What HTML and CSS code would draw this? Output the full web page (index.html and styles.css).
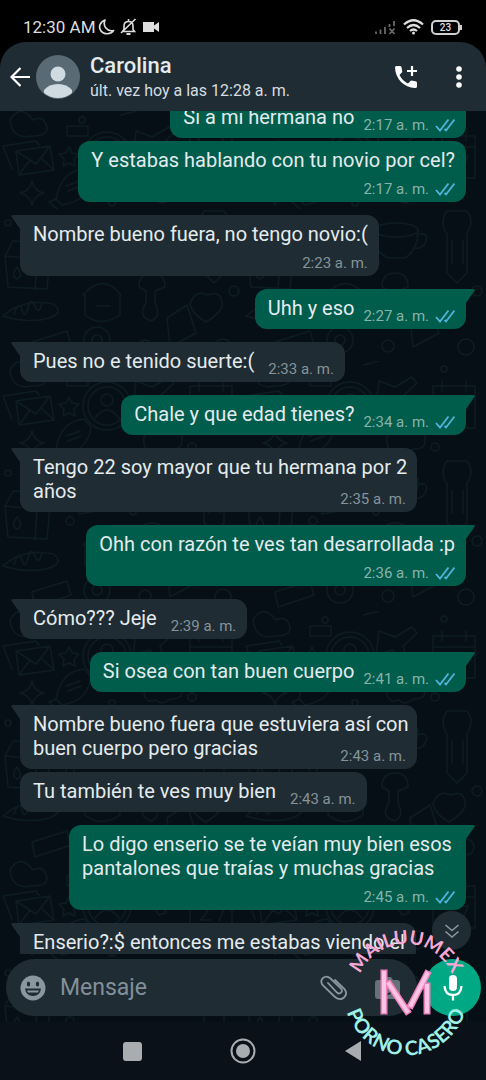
FILE: index.html
```html
<!DOCTYPE html>
<html lang="es">
<head>
<meta charset="utf-8">
<meta name="viewport" content="width=device-width, initial-scale=1">
<title>Carolina</title>
<link rel="stylesheet" href="styles.css">
</head>
<body>
<svg class="defs" width="0" height="0" aria-hidden="true">
  <symbol id="checks" viewBox="0 0 20 14"><path d="M1 8l4 4.500L13.500 1.500M9.500 11l1.500 1.500L19.500 1.500" fill="none" stroke="currentColor" stroke-width="1.800"/></symbol>
  <symbol id="tail" viewBox="0 0 9 14"><path d="M0 0h7q3 0 1 2.500L0 14z" fill="currentColor"/></symbol>
</svg>

<div class="statusbar">
  <span class="clock">12:30 AM</span>
  <svg width="17" height="18" viewBox="0 0 17 18"><path d="M7 2C2 4 0 9 3 13s10 3.500 12.500-.5C9 14 4.500 8 7 2z" fill="none" stroke="currentColor" stroke-width="1.700" stroke-linejoin="round"/></svg>
  <svg class="bell" width="17" height="18" viewBox="0 0 17 18" fill="none" stroke="currentColor" stroke-width="1.600"><path d="M2.500 13.500h12l-1.500-2V8c0-3-1.500-4.500-4.500-4.500S4 5 4 8v3.500zM15.500 1L1 15M8.500 1v2"/><path d="M6.500 16h4" stroke-width="2"/></svg>
  <svg class="video" width="18" height="12" viewBox="0 0 18 12"><path d="M1 1h11v3.500L17 1v10l-5-3.500V11H1z" fill="currentColor"/></svg>
  <span class="spacer"></span>
  <svg class="signal" width="22" height="15" viewBox="0 0 22 15" fill="none" stroke="currentColor" stroke-width="1.800"><path d="M2 11.500V14M6.500 9.500V14M11 7v7M15.500 4v3M20 1v5M15.500 8.500l5 5.500m0-5.500l-5 5.500"/></svg>
  <svg class="wifi" width="21" height="16" viewBox="0 0 21 16" fill="none" stroke="currentColor" stroke-width="2.200"><path d="M1 5.500q9.500-8.500 19 0M4 9q6.500-6 13 0M7 12q3.500-3 7 0"/><circle cx="10.500" cy="14" r="1.500" fill="currentColor" stroke="none"/></svg>
  <span class="battery">23</span>
</div>

<header class="topbar">
  <button class="icon-btn" aria-label="Atrás"><svg width="20" height="20" viewBox="0 0 20 20"><path d="M20 10H2M10.500 1L1.500 10l9 9" fill="none" stroke="currentColor" stroke-width="2.200"/></svg></button>
  <svg class="avatar" width="44" height="44" viewBox="0 0 44 44"><defs><clipPath id="round"><circle cx="22" cy="22" r="22"/></clipPath></defs><g clip-path="url(#round)"><path d="M0 0h44v44H0z" fill="#596a75"/><circle cx="22" cy="19" r="7.500" fill="#d0dbe1"/><path d="M8 35q5-6 14-6t14 6v3q-6 5-14 5T8 38z" fill="#d0dbe1"/></g></svg>
  <div class="contact">
    <h1 class="name">Carolina</h1>
    <p class="seen">últ. vez hoy a las 12:28 a. m.</p>
  </div>
  <button class="icon-btn call" aria-label="Llamar"><svg width="24" height="24" viewBox="0 0 24 24"><path d="M1 2.500Q1 1 2.500 1H6q1.500 0 1.600 1.500L8.300 7 5.500 10q3 6 8.500 8.500l3-3 4.500.8q1.500.3 1.500 1.700v3.500q0 1.500-2 1.500C10 22.500 1.500 14 1 2.500z" fill="currentColor"/><path d="M18 1v10M13 6h10" stroke="currentColor" stroke-width="2.200"/></svg></button>
  <button class="icon-btn" aria-label="Más opciones"><svg width="6" height="22" viewBox="0 0 6 22" fill="currentColor"><circle cx="3" cy="3" r="2.800"/><circle cx="3" cy="11" r="2.800"/><circle cx="3" cy="19" r="2.800"/></svg></button>
</header>

<main class="chat">
  <svg class="wallpaper" aria-hidden="true">
    <defs>
      <pattern id="doodles" width="243" height="250" patternUnits="userSpaceOnUse">
        <g fill="none" stroke="#0d1b22" stroke-width="1.500" stroke-linecap="round" stroke-linejoin="round">
          <path d="M16 40l34-5 4 24-35 5zM16 40l20 13 14-18M19 64l11-15M54 59L41 47M12 58L3 35l33-5 3 4"/>
          <path d="M69 36l3 6 7 1-5 5 1 7-6-3-6 3 1-7-5-5 7-1z"/>
          <path d="M32 70q2 10 12 12-10 2-12 12-2-10-12-12 10-2 12-12z"/>
          <path d="M56 88q5-28 28-30l7 8q-3 24-29 28zM56 88l-7 3 8 7M66 75l14-5M68 80l13-5"/>
          <path d="M5 145l8-15 30 2 7 14-3 32-39-2zM5 145l32 3 13-2M37 148l-2 31"/><path d="M17 156q-7 10 0 12 7-2 0-12z"/>
          <path d="M3 205q20-18 50-12 12 8-4 14-20 6-46-2zM14 203q5-14 8-4t6-2 7-2 7-3"/>
          <circle cx="107" cy="45" r="19"/><circle cx="107" cy="45" r="24"/><circle cx="107" cy="39" r="6"/><path d="M95 57q12-16 24 0"/>
          <path d="M136 20l16 6 17-10 5 6-14 13 6 17-7 2-9-15-17 5z"/>
          <path d="M190 25h42v42h-42zM190 36h42M199 20v10M223 20v10M200 47q5-6 8 0 0 5-8 12h10M216 45h9l-6 15"/>
          <path d="M145 86q-5-16 9-16 7-11 15 0 14-2 13 10 0 9-12 8-8 7-14 1-8 3-11-3z"/>
          <ellipse cx="153" cy="119" rx="22" ry="7"/><path d="M131 119q-2 22 15 28h16q13-8 13-28M174 124q12-4 9 6-3 9-13 7"/>
          <path d="M77 119l23-6-4 37-17 3zM98 120q7-15 17-5 6 15-15 19M82 132l14-3"/>
          <path d="M204 100h20q8 10 0 22v40l-10 10-10-10v-39q-8-12 0-23zM209 130v22M220 130v22"/>
          <path d="M83 184q20-23 38 0M85 184v20q16 13 35 0v-20M96 195h14"/>
          <path d="M139 176q0-14 13-14t13 14l-10 4v12q7 14-4 18-14-5-5-18v-12z"/>
          <path d="M190 193q5-15 18-9 13-5 14 8 1 9-16 19-14-8-16-18z"/>
          <path d="M10 9q10-17 23 0 12-5 14 8 0 8-15 8-20 4-22-16M121 4l15-4M67 15h21v10H67zM167 207l20-13 9 28-26 14zM32 231l35-11 4 14-36 12z"/>
          <circle cx="70" cy="160" r="4"/><circle cx="82" cy="9" r="3"/><circle cx="61" cy="117" r="4"/><circle cx="133" cy="151" r="3"/><circle cx="192" cy="86" r="4"/><circle cx="234" cy="180" r="5"/><circle cx="8" cy="112" r="3"/><circle cx="97" cy="229" r="13"/><circle cx="97" cy="229" r="5"/><circle cx="145" cy="235" r="6"/><circle cx="223" cy="236" r="8"/><circle cx="112" cy="92" r="3"/><circle cx="201" cy="8" r="3"/>
        </g>
      </pattern>
    </defs>
    <rect width="100%" height="100%" fill="url(#doodles)"/>
  </svg>

  <div class="thread">
    <div class="messages">
      <div class="bubble out inline"><p class="text">Si a mi hermana no</p><span class="meta">2:17 a. m. <svg class="checks"><use href="#checks"/></svg></span></div>
      <div class="bubble out stacked"><p class="text">Y estabas hablando con tu novio por cel?</p><span class="meta">2:17 a. m. <svg class="checks"><use href="#checks"/></svg></span></div>
      <div class="bubble in first stacked"><svg class="tail"><use href="#tail"/></svg><p class="text">Nombre bueno fuera, no tengo novio:(</p><span class="meta">2:23 a. m.</span></div>
      <div class="bubble out first inline"><svg class="tail"><use href="#tail"/></svg><p class="text">Uhh y eso</p><span class="meta">2:27 a. m. <svg class="checks"><use href="#checks"/></svg></span></div>
      <div class="bubble in first inline"><svg class="tail"><use href="#tail"/></svg><p class="text">Pues no e tenido suerte:(</p><span class="meta">2:33 a. m.</span></div>
      <div class="bubble out first inline"><svg class="tail"><use href="#tail"/></svg><p class="text">Chale y que edad tienes?</p><span class="meta">2:34 a. m. <svg class="checks"><use href="#checks"/></svg></span></div>
      <div class="bubble in first tucked"><svg class="tail"><use href="#tail"/></svg><p class="text">Tengo 22 soy mayor que tu hermana por 2 años</p><span class="meta">2:35 a. m.</span></div>
      <div class="bubble out first stacked"><svg class="tail"><use href="#tail"/></svg><p class="text">Ohh con razón te ves tan desarrollada :p</p><span class="meta">2:36 a. m. <svg class="checks"><use href="#checks"/></svg></span></div>
      <div class="bubble in first inline"><svg class="tail"><use href="#tail"/></svg><p class="text">Cómo??? Jeje</p><span class="meta">2:39 a. m.</span></div>
      <div class="bubble out first inline"><svg class="tail"><use href="#tail"/></svg><p class="text">Si osea con tan buen cuerpo</p><span class="meta">2:41 a. m. <svg class="checks"><use href="#checks"/></svg></span></div>
      <div class="bubble in first tucked"><svg class="tail"><use href="#tail"/></svg><p class="text">Nombre bueno fuera que estuviera así con buen cuerpo pero gracias</p><span class="meta">2:43 a. m.</span></div>
      <div class="bubble in inline"><p class="text">Tu también te ves muy bien</p><span class="meta">2:43 a. m.</span></div>
      <div class="bubble out first stacked"><svg class="tail"><use href="#tail"/></svg><p class="text">Lo digo enserio se te veían muy bien esos pantalones que traías y muchas gracias</p><span class="meta">2:45 a. m. <svg class="checks"><use href="#checks"/></svg></span></div>
      <div class="bubble in first stacked"><svg class="tail"><use href="#tail"/></svg><p class="text">Enserio?:$ entonces me estabas viendo el</p></div>
    </div>
  </div>

  <form class="composer">
    <div class="field">
      <button type="button" class="icon-btn" aria-label="Emojis"><svg width="26" height="26" viewBox="0 0 26 26"><circle cx="13" cy="13" r="12.500" fill="currentColor"/><g fill="#202c33"><ellipse cx="8.500" cy="9" rx="1.700" ry="2.500"/><ellipse cx="17.500" cy="9" rx="1.700" ry="2.500"/><path d="M5 13.500h16q-1 7.500-8 7.500t-8-7.500z"/></g><path d="M7 15.500h12l-1 2H8z" fill="currentColor"/></svg></button>
      <input class="entry" type="text" placeholder="Mensaje" aria-label="Mensaje">
      <button type="button" class="icon-btn" aria-label="Adjuntar"><svg width="28" height="26" viewBox="0 0 28 26"><path d="M8 8l9 9.500q2 2 4 .2t0-4L10.500 3.500Q6.500 0 3 3t0 7.500L15 22q5 4 9 .5t.5-8.500L15 5" fill="none" stroke="currentColor" stroke-width="1.800" stroke-linecap="round"/></svg></button>
      <button type="button" class="icon-btn camera" aria-label="Cámara"><svg width="25" height="22" viewBox="0 0 25 22"><path d="M3 3h4l2-3h7l2 3h4q3 0 3 3v13q0 3-3 3H3q-3 0-3-3V6q0-3 3-3z" fill="currentColor"/><circle cx="12.500" cy="12" r="5" fill="none" stroke="#202c33" stroke-width="2"/></svg></button>
    </div>
    <button type="button" class="mic" aria-label="Grabar"><svg width="20" height="26" viewBox="0 0 20 26"><rect x="6" y="0" width="8" height="16" rx="4" fill="#fff"/><path d="M1.500 11q.5 9 8.500 9t8.500-9M10 20v5.500" fill="none" stroke="#fff" stroke-width="2.300"/></svg></button>
  </form>

  <button class="to-end" aria-label="Ir al final"><svg width="16" height="16" viewBox="0 0 16 16"><path d="M1.500 2L8 7.500 14.500 2M1.500 8.500L8 14l6.500-5.500" fill="none" stroke="currentColor" stroke-width="1.600"/></svg></button>
</main>

<nav class="navbar">
  <button class="icon-btn" aria-label="Recientes"><svg width="19" height="19" viewBox="0 0 19 19"><rect width="19" height="19" rx="3" fill="currentColor"/></svg></button>
  <button class="icon-btn" aria-label="Inicio"><svg width="26" height="26" viewBox="0 0 26 26"><circle cx="13" cy="13" r="11.500" fill="none" stroke="currentColor" stroke-width="2"/><circle cx="13" cy="13" r="7" fill="currentColor"/></svg></button>
  <button class="icon-btn" aria-label="Volver"><svg width="18" height="22" viewBox="0 0 18 22"><path d="M17 1v20L1 11z" fill="currentColor"/></svg></button>
</nav>

<svg class="stamp" width="150" height="150" viewBox="0 0 150 150">
  <defs>
    <path id="arc-top" d="M25 75a50 50 0 0 1 100 0"/>
    <path id="arc-bottom" d="M18 50a62 62 0 1 0 114 0"/>
  </defs>
  <g class="stamp-pink">
    <text><textPath href="#arc-top" startOffset="50%" text-anchor="middle">MAILUUMEX</textPath></text>
    <g fill="none" stroke-linecap="square"><path d="M53 54v38M58 65l18 27M80 86l16-31M96 67v25" stroke="#f07fbf" stroke-width="7"/><path d="M53 54v38M58 65l18 27M80 86l16-31M96 67v25" stroke="#fac5e2" stroke-width="4"/></g>
  </g>
  <text class="stamp-mint"><textPath href="#arc-bottom" startOffset="50%" text-anchor="middle">PORNO CASERO</textPath></text>
</svg>
</body>
</html>
```
FILE: styles.css
```css
* { box-sizing: border-box; }

body {
  position: relative;
  display: flex;
  flex-direction: column;
  height: 100vh;
  margin: 0;
  overflow: hidden;
  background: #000;
  color: #e4ebee;
  font-family: Roboto, "Noto Sans", sans-serif;
}

h1, p { margin: 0; }
svg { display: block; flex: none; }
.defs { position: absolute; }

button {
  display: grid;
  place-items: center;
  padding: 0;
  border: 0;
  background: none;
  color: inherit;
}

.statusbar {
  display: flex;
  align-items: center;
  height: 42px;
  padding: 12px 26px 0 23px;
  color: #dedede;
}
.clock { margin-right: 3px; font-size: 17px; line-height: 20px; }
.bell { margin-left: 5px; }
.video { margin-left: 5px; }
.spacer { flex: 1; }
.signal { color: #686868; }
.wifi { margin: 0 7px; }
.battery {
  position: relative;
  width: 29px;
  height: 15px;
  border: 2px solid #d0d0d0;
  border-radius: 5px;
  font-size: 10px;
  font-weight: 500;
  line-height: 11px;
  text-align: center;
}
.battery::after {
  content: "";
  position: absolute;
  top: 3px;
  right: -4px;
  width: 2px;
  height: 5px;
  background: #d0d0d0;
}

.topbar {
  display: flex;
  align-items: center;
  height: 69px;
  padding: 0 24px 0 10px;
  border-radius: 26px 26px 0 0;
  background: #202c33;
  color: #fff;
}
.avatar { margin-left: 6px; }
.contact { flex: 1; margin-left: 10px; padding-top: 2px; }
.name { color: #e4ebee; font-size: 22px; font-weight: 500; line-height: 26px; }
.seen { color: #d5dde1; font-size: 16px; line-height: 24px; }
.call { margin-right: 38px; }

.chat {
  position: relative;
  display: flex;
  flex: 1;
  flex-direction: column;
  min-height: 0;
  background: #050f15;
}
.wallpaper { position: absolute; width: 100%; height: 100%; }

.thread {
  position: relative;
  display: flex;
  flex: 1;
  flex-direction: column;
  justify-content: flex-end;
  min-height: 0;
  padding: 0 20px;
  overflow: hidden;
}
.messages {
  display: flex;
  flex-direction: column;
  align-items: flex-start;
  gap: 3px;
  margin-bottom: -9px;
}
.bubble {
  position: relative;
  display: flex;
  max-width: 89%;
  padding: 7px 11px 3px 13px;
  border-radius: 12px;
}
.in { background: #202c33; color: #202c33; }
.out { align-self: flex-end; background: #005c4b; color: #005c4b; }
.first { margin-top: 10px; }
.in.first { border-top-left-radius: 0; }
.out.first { border-top-right-radius: 0; }
.text { margin-bottom: 6px; color: #e4ebee; font-size: 20px; line-height: 24px; }
.meta {
  display: flex;
  align-items: center;
  align-self: flex-end;
  gap: 6px;
  color: #85939a;
  font-size: 15px;
  line-height: 20px;
  white-space: nowrap;
}
.out .meta { color: #88b3aa; }
.checks { width: 20px; height: 14px; color: #50b4dc; }

.inline { gap: 9px; }
.in.inline { gap: 14px; }
.stacked { flex-direction: column; }
.stacked .meta { margin-top: 1px; }
.tucked { display: grid; padding-right: 5px; }
.tucked .text, .tucked .meta { grid-area: 1 / 1; }
.tucked .meta { justify-self: end; margin-right: 6px; }

.tail { position: absolute; top: 0; width: 9px; height: 14px; }
.out .tail { left: 100%; }
.in .tail { right: 100%; transform: scaleX(-1); }

.composer {
  position: relative;
  display: flex;
  align-items: center;
  gap: 7px;
  padding: 5px 5px 6px 6px;
}
.field {
  display: flex;
  flex: 1;
  align-items: center;
  min-width: 0;
  height: 57px;
  padding: 0 17px 0 14px;
  border-radius: 29px;
  background: #202c33;
  color: #8a979e;
}
.entry {
  flex: 1;
  min-width: 0;
  padding: 0 14px;
  border: 0;
  outline: 0;
  background: none;
  color: #e4ebee;
  font: 23px/28px Roboto, "Noto Sans", sans-serif;
}
.entry::placeholder { color: #82909a; opacity: 1; }
.camera { margin-left: 27px; color: #66727a; }
.mic {
  flex: none;
  width: 57px;
  height: 57px;
  border-radius: 50%;
  background: #00a884;
}
.to-end {
  position: absolute;
  right: 15px;
  bottom: 72px;
  width: 39px;
  height: 39px;
  border-radius: 50%;
  background: #202c33;
  color: #8a979e;
}

.navbar {
  display: grid;
  grid-template-columns: repeat(3, 1fr);
  place-items: center;
  height: 58px;
  padding: 0 16%;
  background: #0a1118;
  color: #aaadb0;
}

.stamp {
  position: absolute;
  right: 5px;
  bottom: 11px;
  font-family: Lato, sans-serif;
  font-size: 19px;
  font-weight: 700;
  pointer-events: none;
}
.stamp-pink { fill: #f7a8d6; }
.stamp-mint { fill: #9ff0e6; font-size: 20px; }
```
